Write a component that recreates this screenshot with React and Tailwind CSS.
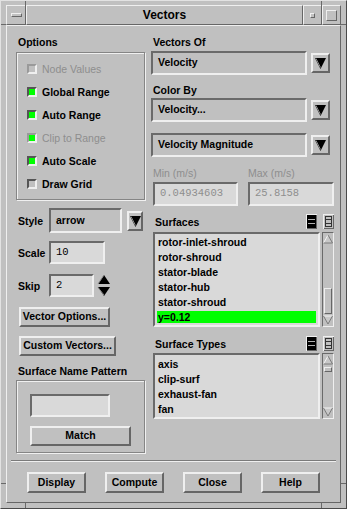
import React from "react";

const RAISED = "border-2 border-t-[#efefef] border-l-[#efefef] border-r-[#666666] border-b-[#666666]";
const RAISED1 = "border border-t-[#efefef] border-l-[#efefef] border-r-[#666666] border-b-[#666666]";
const SUNKEN = "border-2 border-t-[#6a6a6a] border-l-[#6a6a6a] border-r-[#efefef] border-b-[#efefef]";
const SUNKEN1 = "border border-t-[#6a6a6a] border-l-[#6a6a6a] border-r-[#efefef] border-b-[#efefef]";
const ETCHED = "border border-[#858585] shadow-[inset_1px_1px_0_#f0f0f0,1px_1px_0_#f0f0f0]";
const LABEL = "h-[12px] leading-[12px] text-[10.5px] font-bold whitespace-nowrap";
const MONO = "font-['Liberation_Mono',monospace] text-[10.5px]";

function Check({ label, on, disabled }) {
  return (
    <div className="flex items-center h-[23px]">
      <span
        className={`w-[10px] h-[10px] border-2 border-r-[#efefef] border-b-[#efefef] ${
          disabled ? "border-t-[#9a9a9a] border-l-[#9a9a9a]" : "border-t-[#555555] border-l-[#555555]"
        } ${on ? "bg-[#00ff00]" : "bg-[#c0c0c0]"}`}
      />
      <span className={`ml-[5px] ${LABEL} ${disabled ? "text-[#8e8e8e] font-normal" : ""}`}>{label}</span>
    </div>
  );
}

function MenuArrow({ className }) {
  return (
    <div className={`${RAISED} bg-[#c0c0c0] flex items-center justify-center ${className}`}>
      <svg width="11" height="12" viewBox="0 0 11 12">
        <path d="M0 1H11L5.5 12Z" fill="#000" />
        <path d="M1 1.5L5.5 10.5" stroke="#8c8c8c" strokeWidth="1" />
      </svg>
    </div>
  );
}

function OptionField({ text, className }) {
  return (
    <div className={`${SUNKEN} bg-[#c0c0c0] flex items-center pl-[5px] text-[10.5px] font-bold whitespace-nowrap ${className}`}>
      {text}
    </div>
  );
}

function Button({ text, className }) {
  return (
    <div className={`${RAISED} bg-[#c0c0c0] flex items-center justify-center text-[10.5px] font-bold whitespace-nowrap ${className}`}>
      {text}
    </div>
  );
}

function ListButtons() {
  return (
    <div className="flex gap-[6px]">
      <svg width="11" height="15" viewBox="0 0 11 15">
        <rect x="0" y="0" width="11" height="15" fill="#efefef" />
        <rect x="1" y="1" width="10" height="14" fill="#666666" />
        <rect x="1" y="1" width="9" height="13" fill="#000" />
        <rect x="2" y="5" width="7" height="1" fill="#b0b0b0" />
        <rect x="2" y="9" width="7" height="1" fill="#b0b0b0" />
      </svg>
      <svg width="11" height="15" viewBox="0 0 11 15">
        <rect x="0" y="0" width="11" height="15" fill="#efefef" />
        <rect x="1" y="1" width="10" height="14" fill="#666666" />
        <rect x="1" y="1" width="9" height="13" fill="#c0c0c0" />
        <rect x="2.5" y="2.5" width="6" height="10" fill="none" stroke="#333" strokeWidth="1" />
        <rect x="2" y="5" width="7" height="1" fill="#333" />
        <rect x="2" y="9" width="7" height="1" fill="#333" />
      </svg>
    </div>
  );
}

function UpArrow() {
  return (
    <svg width="10" height="10" viewBox="0 0 10 10" className="shrink-0">
      <path d="M5 1L9.5 9H0.5Z" fill="#c8c8c8" />
      <path d="M5 1L0.5 9" stroke="#f4f4f4" strokeWidth="1" />
      <path d="M5 1L9.5 9H0.5" fill="none" stroke="#7a7a7a" strokeWidth="1" />
    </svg>
  );
}

function DownArrow() {
  return (
    <svg width="10" height="10" viewBox="0 0 10 10" className="shrink-0">
      <path d="M0.5 1H9.5L5 9Z" fill="#c8c8c8" />
      <path d="M0.5 1H9.5" stroke="#f4f4f4" strokeWidth="1" />
      <path d="M9.5 1L5 9L0.5 1" fill="none" stroke="#7a7a7a" strokeWidth="1" />
    </svg>
  );
}

function Scrollbar({ thumbTop }) {
  return (
    <div className={`${SUNKEN1} w-[12px] h-full bg-[#c0c0c0] flex flex-col items-center pt-[1px] pb-[1px]`}>
      <UpArrow />
      <div className={`flex-1 w-full flex flex-col px-[1px] ${thumbTop ? "justify-start pt-[2px]" : "justify-end pb-[1px]"}`}>
        <div className={`${RAISED1} bg-[#c0c0c0] w-full ${thumbTop ? "h-[5px]" : "h-[26px]"}`} />
      </div>
      <DownArrow />
    </div>
  );
}

function ListBox({ items, selected, pt }) {
  return (
    <div className={`${SUNKEN} w-[167px] h-full bg-[#d9d9d9] flex flex-col gap-[3px] px-[2px] ${pt}`}>
      {items.map((it) => (
        <div
          key={it}
          className={`h-[12px] leading-[12px] text-[10.5px] font-bold pl-[1px] whitespace-nowrap ${
            it === selected ? "bg-[#00ff00]" : ""
          }`}
        >
          {it}
        </div>
      ))}
    </div>
  );
}

function Corner({ className }) {
  return <div className={`absolute bg-[#6a6a6a] ${className}`} />;
}

export default function App() {
  return (
    <div className="relative w-[347px] h-[509px] bg-[#c0c0c0] border border-t-[#e2e2e2] border-l-[#e2e2e2] border-r-[#4a4a4a] border-b-[#4a4a4a] px-[5px] pt-[4px] pb-[5px] font-['Liberation_Sans',Arial,sans-serif] text-black overflow-hidden">
      {/* window manager corner marks */}
      <Corner className="left-[24px] top-0 w-[1px] h-[5px]" />
      <Corner className="left-[320px] top-0 w-[1px] h-[5px]" />
      <Corner className="left-[24px] bottom-0 w-[1px] h-[5px]" />
      <Corner className="left-[320px] bottom-0 w-[1px] h-[5px]" />
      <Corner className="left-0 top-[23px] w-[5px] h-[1px]" />
      <Corner className="right-0 top-[23px] w-[5px] h-[1px]" />
      <Corner className="left-0 top-[482px] w-[5px] h-[1px]" />
      <Corner className="right-0 top-[482px] w-[5px] h-[1px]" />

      <div className="flex flex-col h-full">
        {/* title bar */}
        <div className="flex h-[20px] shrink-0">
          <div className={`${RAISED1} w-[20px] flex items-center justify-center`}>
            <div className={`${RAISED1} w-[11px] h-[4px]`} />
          </div>
          <div className={`${RAISED1} flex-1 flex items-center justify-center text-[12px] font-bold`}>Vectors</div>
          <div className={`${RAISED1} w-[19px] flex items-center justify-center`}>
            <div className={`${RAISED1} w-[5px] h-[5px]`} />
          </div>
          <div className={`${RAISED1} w-[19px] flex items-center justify-center`}>
            <div className={`${RAISED1} w-[11px] h-[11px]`} />
          </div>
        </div>

        {/* dialog body */}
        <div className={`${RAISED1} flex-1 flex flex-col`}>
          <div className="flex pt-[10px]">
            {/* left column */}
            <div className="ml-[9px] w-[129px] flex flex-col">
              <div className={`${LABEL} ml-[2px]`}>Options</div>
              <div className={`${ETCHED} mt-[4px] h-[148px] pl-[10px] pt-[4px] flex flex-col`}>
                <Check label="Node Values" disabled />
                <Check label="Global Range" on />
                <Check label="Auto Range" on />
                <Check label="Clip to Range" on disabled />
                <Check label="Auto Scale" on />
                <Check label="Draw Grid" />
              </div>

              <div className="mt-[8px] h-[25px] flex items-center">
                <div className={`${LABEL} ml-[2px] w-[31px]`}>Style</div>
                <OptionField text="arrow" className="w-[73px] h-[25px]" />
                <MenuArrow className="ml-[5px] w-[16px] h-[20px]" />
              </div>

              <div className="mt-[8px] h-[23px] flex items-center">
                <div className={`${LABEL} ml-[2px] w-[31px]`}>Scale</div>
                <div className={`${SUNKEN} ${MONO} w-[56px] h-[23px] bg-[#d9d9d9] flex items-center pl-[5px]`}>10</div>
              </div>

              <div className="mt-[10px] h-[23px] flex items-center">
                <div className={`${LABEL} ml-[2px] w-[31px]`}>Skip</div>
                <div className={`${SUNKEN} ${MONO} w-[45px] h-[23px] bg-[#d9d9d9] flex items-center pl-[5px]`}>2</div>
                <svg width="14" height="23" viewBox="0 0 14 23" className="ml-[3px]">
                  <path d="M7 1L13 10H1Z" fill="#000" />
                  <path d="M7 1L1 10" stroke="#8c8c8c" strokeWidth="1" />
                  <path d="M1 13H13L7 22Z" fill="#000" />
                  <path d="M1 13.5L7 21" stroke="#8c8c8c" strokeWidth="1" />
                </svg>
              </div>

              <Button text="Vector Options..." className="mt-[10px] ml-[3px] w-[91px] h-[20px]" />
              <Button text="Custom Vectors..." className="mt-[9px] ml-[3px] w-[97px] h-[20px]" />

              <div className={`${LABEL} mt-[9px] ml-[2px]`}>Surface Name Pattern</div>
              <div className={`${ETCHED} mt-[3px] h-[73px] flex flex-col pl-[13px] pt-[13px]`}>
                <div className={`${SUNKEN} w-[80px] h-[23px] bg-[#d9d9d9]`} />
                <Button text="Match" className="mt-[9px] w-[101px] h-[20px]" />
              </div>
            </div>

            {/* right column */}
            <div className="ml-[6px] w-[183px] flex flex-col">
              <div className={`${LABEL} ml-[2px]`}>Vectors Of</div>
              <div className="mt-[3px] h-[24px] flex items-center">
                <OptionField text="Velocity" className="w-[156px] h-[24px]" />
                <MenuArrow className="ml-[4px] w-[19px] h-[20px]" />
              </div>

              <div className={`${LABEL} mt-[9px] ml-[2px]`}>Color By</div>
              <div className="mt-[2px] h-[24px] flex items-center">
                <OptionField text="Velocity..." className="w-[156px] h-[24px]" />
                <MenuArrow className="ml-[4px] w-[19px] h-[20px]" />
              </div>
              <div className="mt-[11px] h-[24px] flex items-center">
                <OptionField text="Velocity Magnitude" className="w-[156px] h-[24px]" />
                <MenuArrow className="ml-[4px] w-[19px] h-[20px]" />
              </div>

              <div className="mt-[10px] flex">
                <div className={`${LABEL} ml-[2px] w-[95px] text-[#8e8e8e] font-normal`}>Min (m/s)</div>
                <div className={`${LABEL} text-[#8e8e8e] font-normal`}>Max (m/s)</div>
              </div>
              <div className="mt-[3px] flex">
                <div className={`${SUNKEN} ${MONO} ml-[2px] w-[85px] h-[24px] bg-[#d9d9d9] text-[#8e8e8e] flex items-center pl-[5px]`}>
                  0.04934603
                </div>
                <div className={`${SUNKEN} ${MONO} ml-[10px] w-[86px] h-[24px] bg-[#d9d9d9] text-[#8e8e8e] flex items-center pl-[5px]`}>
                  25.8158
                </div>
              </div>

              <div className="mt-[8px] h-[15px] flex items-center">
                <div className={`${LABEL} ml-[4px] flex-1`}>Surfaces</div>
                <ListButtons />
              </div>
              <div className="mt-[3px] h-[95px] flex ml-[2px] gap-[2px]">
                <ListBox
                  items={["rotor-inlet-shroud", "rotor-shroud", "stator-blade", "stator-hub", "stator-shroud", "y=0.12"]}
                  selected="y=0.12"
                  pt="pt-[2px]"
                />
                <Scrollbar />
              </div>

              <div className="mt-[9px] h-[15px] flex items-center">
                <div className={`${LABEL} ml-[4px] flex-1`}>Surface Types</div>
                <ListButtons />
              </div>
              <div className="mt-[2px] h-[66px] flex ml-[2px] gap-[2px]">
                <ListBox items={["axis", "clip-surf", "exhaust-fan", "fan"]} pt="pt-[3px]" />
                <Scrollbar thumbTop />
              </div>
            </div>
          </div>

          <div className="mt-[7px] mx-[4px] h-[2px] border-t border-t-[#7a7a7a] border-b border-b-[#efefef]" />

          <div className="mt-[10px] pl-[20px] flex gap-[19px]">
            <Button text="Display" className="w-[59px] h-[21px]" />
            <Button text="Compute" className="w-[59px] h-[21px]" />
            <Button text="Close" className="w-[59px] h-[21px]" />
            <Button text="Help" className="w-[59px] h-[21px]" />
          </div>
        </div>
      </div>
    </div>
  );
}
